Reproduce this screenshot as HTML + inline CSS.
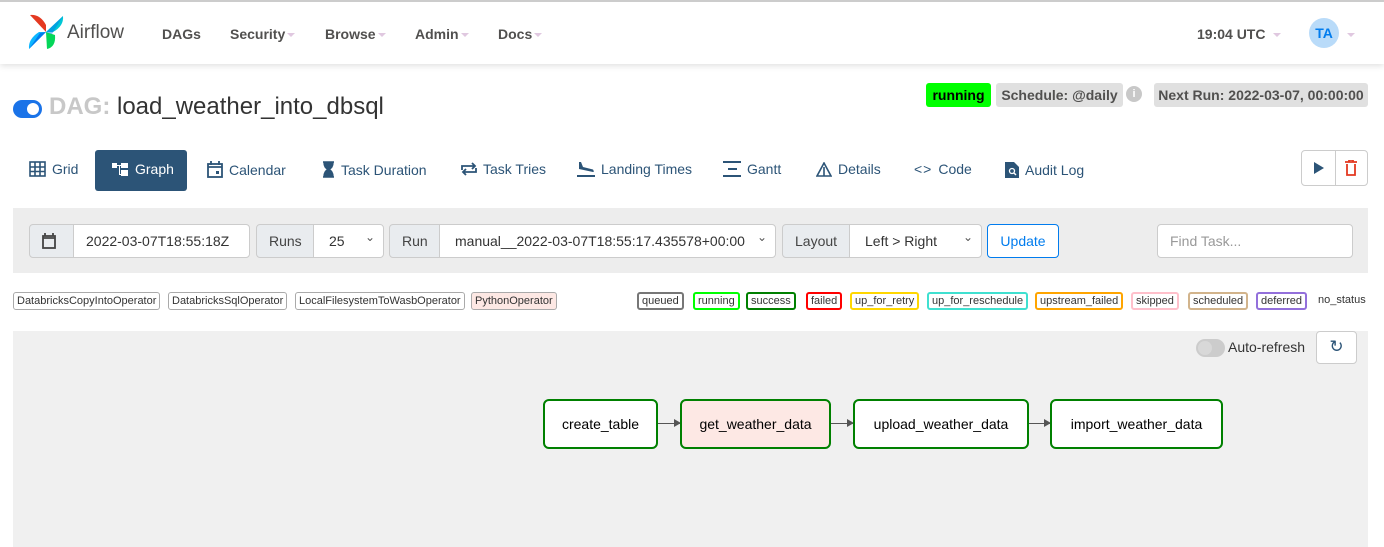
<!DOCTYPE html>
<html><head><meta charset="utf-8"><style>
*{box-sizing:border-box;margin:0;padding:0}
body{width:1384px;height:547px;overflow:hidden;background:#fff;font-family:"Liberation Sans",sans-serif;position:relative;color:#51504f}
.a{position:absolute}
.nav{left:0;top:0;width:1384px;height:64px;background:#fff;border-top:2px solid #ccc;box-shadow:0 2px 6px rgba(0,0,0,.12)}
.ni{position:absolute;top:24px;font-size:14px;font-weight:bold;color:#51504f}
.car{display:inline-block;width:0;height:0;border-left:4px solid transparent;border-right:4px solid transparent;border-top:4px solid #e0c8e0;margin-left:2px;vertical-align:middle}
.badge{position:absolute;top:83px;height:24px;line-height:24px;font-size:14px;font-weight:bold;border-radius:3px;padding:0 8px;color:#51504f;white-space:nowrap}
.tab{position:absolute;top:161px;font-size:14px;color:#2c5477;display:flex;align-items:center;gap:6px;white-space:nowrap}
.box{position:absolute;top:224px;height:34px;border:1px solid #ccc;font-size:14px;line-height:32px;color:#333;background:#fff;white-space:nowrap}
.add{background:#e9ecef;color:#444;padding:0 12px}
.tag{position:absolute;top:292px;height:18px;line-height:16px;font-size:11px;border:1px solid #aaa;border-radius:3px;padding:0 3px;color:#333;background:#fff}
.st{position:absolute;top:292px;height:18px;line-height:14px;font-size:11px;border:2px solid;border-radius:3px;padding:0 3px;color:#333;background:#fff}
.node{position:absolute;top:399px;height:50px;border:2px solid #008000;border-radius:6px;background:#fff;font-size:14px;color:#000;text-align:center;line-height:46px}
.arr{position:absolute;top:423px;height:1px;background:#555}
.arr:after{content:"";position:absolute;right:-1px;top:-4px;border-left:7px solid #555;border-top:4px solid transparent;border-bottom:4px solid transparent}
.sel:after{content:"⌄";position:absolute;right:8px;top:-4px;font-size:12px;color:#555}
</style></head><body>
<div class="a nav">
 <svg class="a" style="left:27px;top:11px" width="38" height="38" viewBox="0 0 38 38">
  <path d="M19 19 L3 2 Q13 1 19 12Z" fill="#e43921"/>
  <path d="M19 19 L36 3 Q37 13 26 19Z" fill="#00c7d4"/>
  <path d="M19 19 L2 36 Q1 26 12 19Z" fill="#0cb6ff"/>
  <path d="M19 19 L20 36 Q29 34 28 22Z" fill="#04d659"/>
  <path d="M19 19 L36 3 L25 21Z" fill="#017cee" opacity=".5"/>
  <path d="M19 19 L2 36 L13 20Z" fill="#017cee"/>
 </svg>
 <div class="a" style="left:67px;top:20px;font-size:19px;color:#51504f">Airflow</div>
 <div class="ni" style="left:162px">DAGs</div>
 <div class="ni" style="left:230px">Security<span class="car"></span></div>
 <div class="ni" style="left:325px">Browse<span class="car"></span></div>
 <div class="ni" style="left:415px">Admin<span class="car"></span></div>
 <div class="ni" style="left:498px">Docs<span class="car"></span></div>
 <div class="ni" style="left:1197px">19:04 UTC<span class="car" style="margin-left:8px"></span></div>
 <div class="a" style="left:1309px;top:16px;width:30px;height:30px;border-radius:50%;background:#b9dbf9;color:#017cee;font-weight:bold;font-size:14px;text-align:center;line-height:30px">TA</div>
 <span class="car a" style="left:1345px;top:31px"></span>
</div>
<div class="a" style="left:13px;top:100px;width:29px;height:18px;border-radius:9px;background:#1a73e8"><div class="a" style="right:3px;top:3px;width:12px;height:12px;border-radius:50%;background:#fff"></div></div>
<div class="a" style="left:49px;top:93px;font-size:24px;color:#333;white-space:nowrap"><span style="color:#c8c8c8;font-weight:bold">DAG:</span> load_weather_into_dbsql</div>
<div class="badge" style="left:926px;width:65px;padding:0;text-align:center;background:#00ff00;color:#000">running</div>
<div class="badge" style="left:996px;width:127px;padding:0;text-align:center;background:#e0e0e0">Schedule: @daily</div>
<div class="a" style="left:1126px;top:86px;width:16px;height:16px;border-radius:50%;background:#c8c8c8;color:#fff;font-size:11px;font-weight:bold;text-align:center;line-height:16px">i</div>
<div class="badge" style="left:1154px;width:214px;padding:0;text-align:center;background:#e0e0e0">Next Run: 2022-03-07, 00:00:00</div>

<div class="tab" style="left:29px"><svg width="17" height="16"><g fill="none" stroke="#2c5477" stroke-width="1.6"><rect x="1" y="1" width="15" height="14"/><path d="M6 1v14M11 1v14M1 6h15M1 10.5h15"/></g></svg>Grid</div>
<div class="a" style="left:95px;top:150px;width:92px;height:41px;background:#2c5477;border-radius:3px"></div>
<div class="tab" style="left:112px;color:#fff"><svg width="17" height="16"><g fill="#fff"><rect x="0" y="2" width="5" height="5"/><rect x="9" y="2" width="7" height="5"/><rect x="9" y="9" width="7" height="6"/><path d="M5 4h4v1H5zM7 4h1v9h2v1H7z"/></g></svg>Graph</div>
<div class="tab" style="left:207px"><svg width="16" height="17"><g fill="none" stroke="#2c5477" stroke-width="1.8"><rect x="1" y="3" width="14" height="13"/><path d="M4 0v4M12 0v4M1 6h14"/></g><rect x="9" y="10" width="3" height="3" fill="#2c5477"/></svg>Calendar</div>
<div class="tab" style="left:322px"><svg width="13" height="17"><path d="M1 1h11M1 16h11M2 1q0 6 4.5 7.5Q2 10 2 16h9q0-6-4.5-7.5Q11 7 11 1" fill="#2c5477" stroke="#2c5477" stroke-width="1.5"/></svg>Task Duration</div>
<div class="tab" style="left:461px"><svg width="16" height="16"><g fill="none" stroke="#2c5477" stroke-width="1.8"><path d="M1 9V5h13M11 2l3 3-3 3M15 7v4H2M5 14l-3-3 3-3"/></g></svg>Task Tries</div>
<div class="tab" style="left:577px"><svg width="18" height="16"><g fill="#2c5477"><rect x="0" y="14" width="18" height="2"/><path d="M2 1l2 0 2 5 4 1 6 1.5 1 2-1 .5-14-3z"/></g></svg>Landing Times</div>
<div class="tab" style="left:723px"><svg width="18" height="16"><g fill="#2c5477"><rect x="0" y="0" width="18" height="2"/><rect x="5" y="7" width="9" height="2"/><rect x="0" y="14" width="18" height="2"/></g></svg>Gantt</div>
<div class="tab" style="left:816px"><svg width="16" height="15"><path d="M8 1L1 14h14Z M8 5v9" fill="none" stroke="#2c5477" stroke-width="1.6"/></svg>Details</div>
<div class="tab" style="left:914px"><span style="font-size:14px;letter-spacing:1px">&lt;&gt;</span>Code</div>
<div class="tab" style="left:1005px"><svg width="14" height="17"><path d="M0 1h9l5 5v11H0z" fill="#2c5477"/><circle cx="7" cy="10" r="2.5" fill="none" stroke="#fff" stroke-width="1.3"/><path d="M9 12l2 2" stroke="#fff" stroke-width="1.4"/></svg>Audit Log</div>
<div class="a" style="left:1301px;top:150px;width:67px;height:36px;border:1px solid #ccc;border-radius:4px"><div class="a" style="left:33px;top:0;width:1px;height:34px;background:#ccc"></div>
<svg class="a" style="left:12px;top:11px" width="10" height="12"><path d="M0 0L10 6 0 12Z" fill="#2c5477"/></svg>
<svg class="a" style="left:43px;top:9px" width="12" height="16"><g fill="none" stroke="#e43921" stroke-width="1.8"><path d="M0 2h12M4 2V0h4v2M2 4v11h8V4"/></g></svg></div>

<div class="a" style="left:13px;top:208px;width:1355px;height:65px;background:#ededed"></div>
<div class="box add" style="left:29px;width:45px;border-radius:4px 0 0 4px"><svg style="margin-top:8px" width="14" height="16"><g fill="none" stroke="#444" stroke-width="1.8"><rect x="1" y="3" width="12" height="12"/><path d="M3 0v3M11 0v3M1 5h12"/></g></svg></div>
<div class="box" style="left:73px;width:177px;padding-left:12px;border-radius:0 4px 4px 0">2022-03-07T18:55:18Z</div>
<div class="box add" style="left:256px;width:58px;border-radius:4px 0 0 4px">Runs</div>
<div class="box sel" style="left:313px;width:71px;padding-left:15px;border-radius:0 4px 4px 0">25</div>
<div class="box add" style="left:389px;width:51px;border-radius:4px 0 0 4px">Run</div>
<div class="box sel" style="left:439px;width:337px;padding-left:15px;border-radius:0 4px 4px 0">manual__2022-03-07T18:55:17.435578+00:00</div>
<div class="box add" style="left:782px;width:68px;border-radius:4px 0 0 4px">Layout</div>
<div class="box sel" style="left:849px;width:133px;padding-left:15px;border-radius:0 4px 4px 0">Left &gt; Right</div>
<div class="box" style="left:987px;width:72px;border-color:#017cee;color:#017cee;text-align:center;border-radius:4px">Update</div>
<div class="box" style="left:1157px;width:196px;padding-left:12px;color:#999;border-radius:4px">Find Task...</div>

<div class="tag" style="left:13px">DatabricksCopyIntoOperator</div>
<div class="tag" style="left:168px">DatabricksSqlOperator</div>
<div class="tag" style="left:295px">LocalFilesystemToWasbOperator</div>
<div class="tag" style="left:471px;background:#fde8e4">PythonOperator</div>
<div class="st" style="left:637px;border-color:#777">queued</div>
<div class="st" style="left:693px;border-color:#00ff00">running</div>
<div class="st" style="left:746px;border-color:#008000">success</div>
<div class="st" style="left:806px;border-color:#ff0000">failed</div>
<div class="st" style="left:850px;border-color:#ffd700">up_for_retry</div>
<div class="st" style="left:927px;border-color:#40e0d0">up_for_reschedule</div>
<div class="st" style="left:1035px;border-color:#ffa500">upstream_failed</div>
<div class="st" style="left:1131px;border-color:#ffc0cb">skipped</div>
<div class="st" style="left:1188px;border-color:#d2b48c">scheduled</div>
<div class="st" style="left:1256px;border-color:#9370db">deferred</div>
<div class="a" style="left:1318px;top:294px;font-size:11px;color:#333">no_status</div>

<div class="a" style="left:13px;top:331px;width:1355px;height:216px;background:#f0f0f0"></div>
<div class="a" style="left:1196px;top:339px;width:29px;height:18px;border-radius:9px;background:#ccc"><div class="a" style="left:2px;top:2px;width:14px;height:14px;border-radius:50%;background:#d8d8d8"></div></div>
<div class="a" style="left:1228px;top:339px;font-size:14px;color:#333">Auto-refresh</div>
<div class="a" style="left:1316px;top:331px;width:41px;height:33px;border:1px solid #ccc;border-radius:4px;background:#fff;text-align:center;line-height:30px;font-size:17px;color:#2c5477">↻</div>

<div class="node" style="left:543px;width:115px">create_table</div>
<div class="arr" style="left:658px;width:22px"></div>
<div class="node" style="left:680px;width:151px;background:#fde8e4">get_weather_data</div>
<div class="arr" style="left:831px;width:22px"></div>
<div class="node" style="left:853px;width:176px">upload_weather_data</div>
<div class="arr" style="left:1029px;width:21px"></div>
<div class="node" style="left:1050px;width:173px">import_weather_data</div>
</body></html>
